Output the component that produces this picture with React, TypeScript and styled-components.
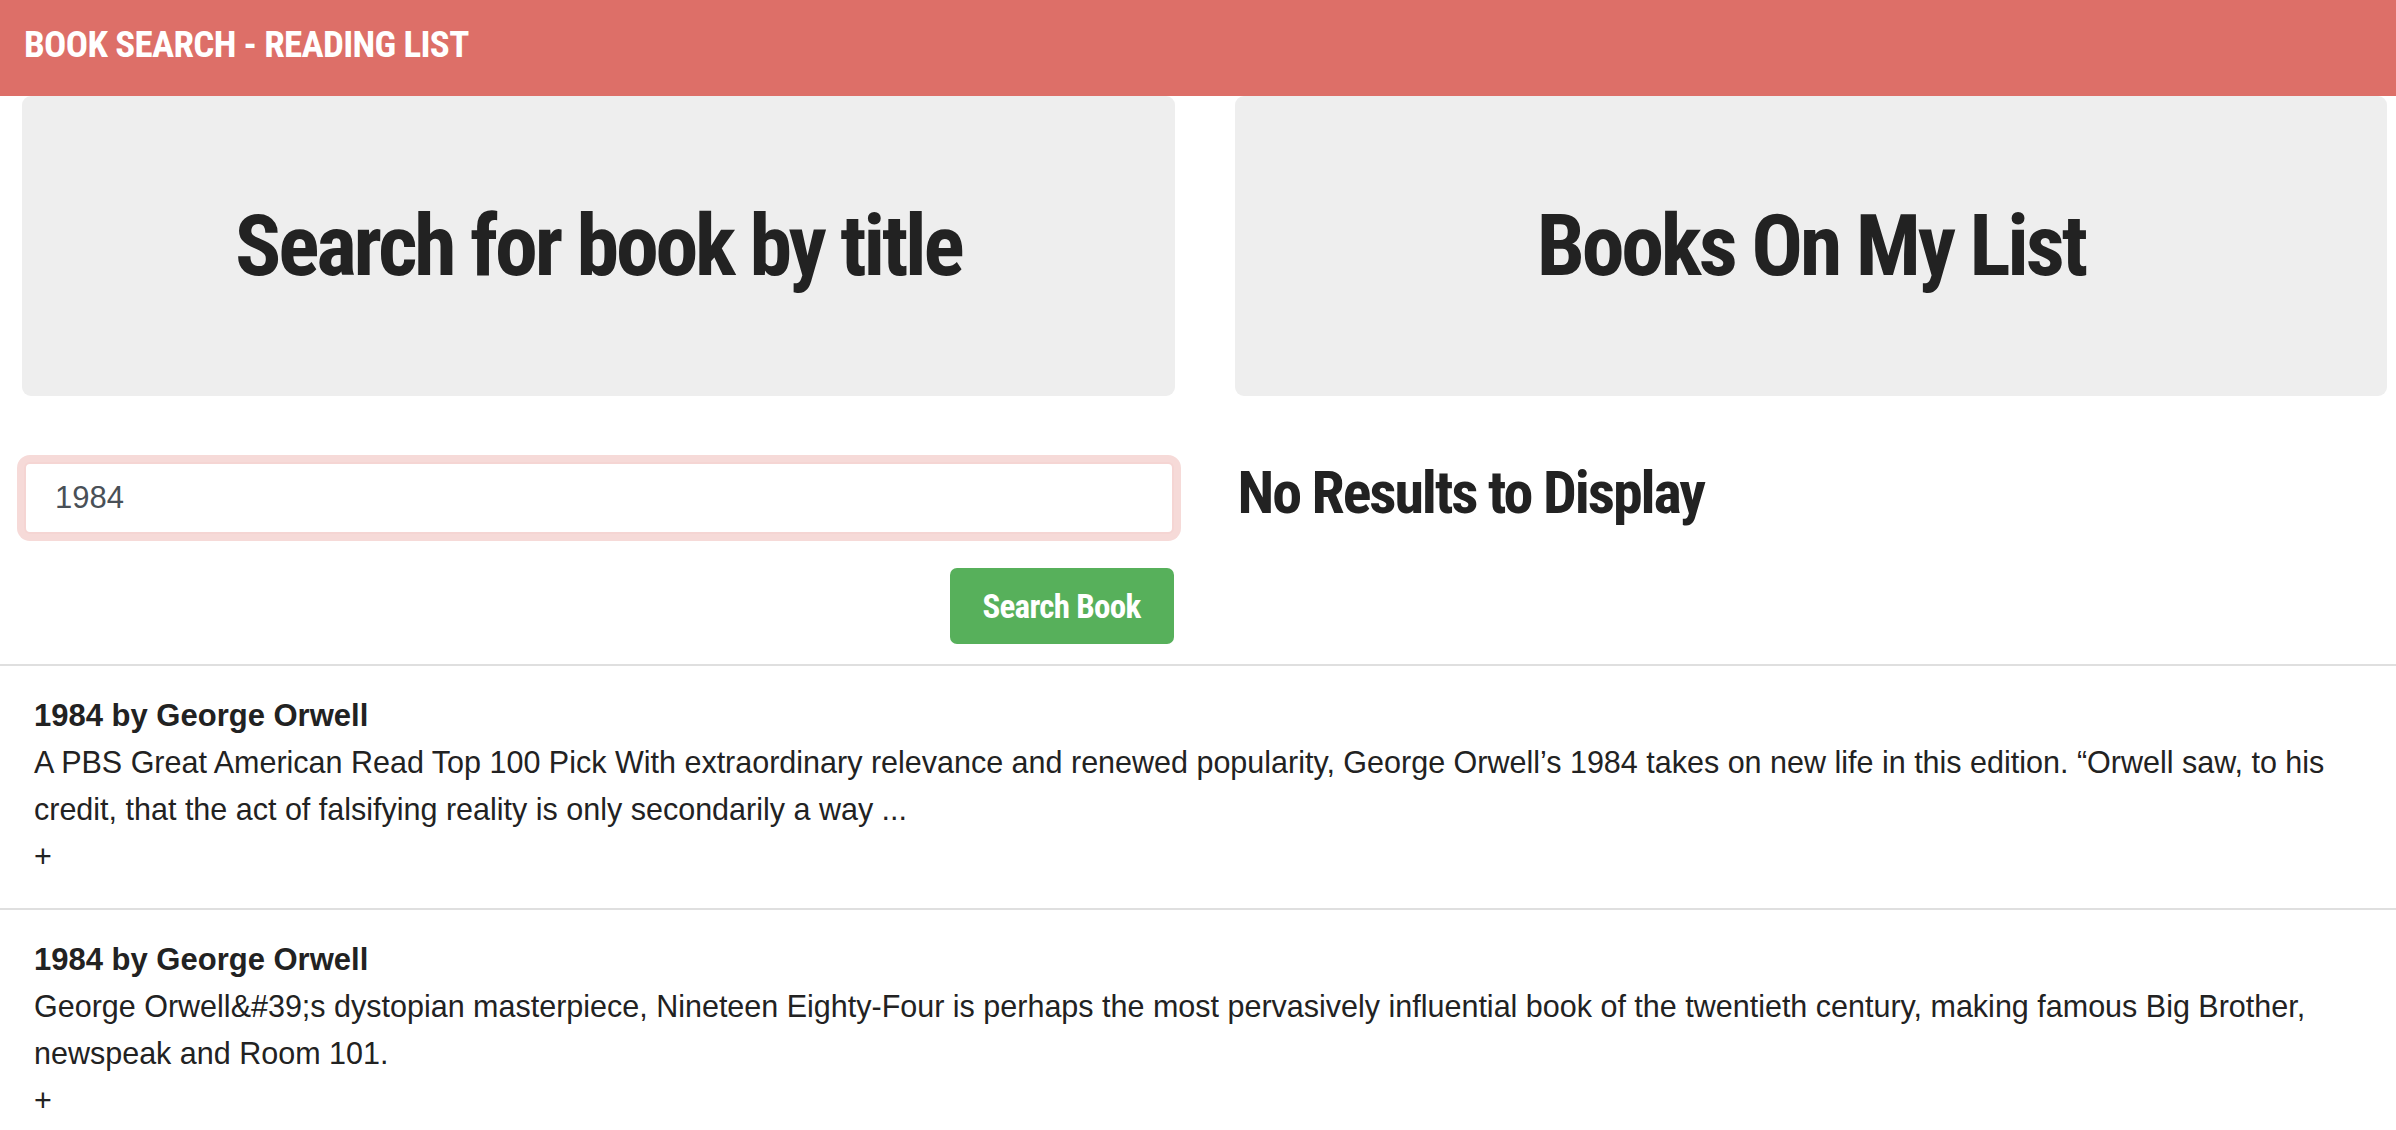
import React from "react";
import styled, { createGlobalStyle } from "styled-components";

const GlobalStyle = createGlobalStyle`
  html, body {
    margin: 0;
    padding: 0;
    background: #ffffff;
  }
  body {
    font-family: "Liberation Sans", Arial, sans-serif;
    color: #222222;
  }
  * {
    box-sizing: border-box;
  }
`;

const condensed = `"Roboto Condensed", "Open Sans Condensed", "DejaVu Sans Condensed", "DejaVu Sans", sans-serif`;

const Navbar = styled.header`
  height: 96px;
  background: #dd6f68;
  padding: 26px 24px 0;
`;

const Brand = styled.div`
  font-family: ${condensed};
  font-stretch: condensed;
  font-weight: 700;
  font-size: 37px;
  line-height: 37px;
  letter-spacing: -0.65px;
  color: #ffffff;
  white-space: nowrap;
`;

const Columns = styled.main`
  display: grid;
  grid-template-columns: 1fr 1fr;
  column-gap: 60px;
  padding: 0 9px 0 22px;
`;

const Column = styled.section`
  display: flex;
  flex-direction: column;
`;

const Jumbotron = styled.div`
  height: 300px;
  background: #eeeeee;
  border-radius: 9px;
  display: flex;
  align-items: center;
  justify-content: center;
`;

const BigTitle = styled.h1`
  margin: 0;
  font-family: ${condensed};
  font-stretch: condensed;
  font-weight: 700;
  font-size: 86px;
  line-height: 1.2;
  letter-spacing: -3.2px;
  color: #222222;
`;

const SearchForm = styled.form`
  display: flex;
  flex-direction: column;
  align-items: flex-end;
  padding: 66px 1px 0 2px;
`;

const SearchInput = styled.input`
  width: 100%;
  height: 72px;
  border: 2px solid #f5d5d3;
  border-radius: 6px;
  box-shadow: 0 0 0 7px #f6dad8;
  padding: 0 29px;
  font-family: "Liberation Sans", Arial, sans-serif;
  font-size: 31px;
  color: #495057;
  outline: none;
  background: #ffffff;
`;

const SearchButton = styled.button`
  margin-top: 34px;
  width: 224px;
  height: 76px;
  border: none;
  border-radius: 7px;
  background: #57b05b;
  color: #ffffff;
  font-family: ${condensed};
  font-stretch: condensed;
  font-weight: 700;
  font-size: 33px;
  letter-spacing: -0.7px;
  cursor: pointer;
`;

const EmptyNote = styled.h3`
  margin: 61px 0 0 3px;
  font-family: ${condensed};
  font-stretch: condensed;
  font-weight: 700;
  font-size: 60px;
  line-height: 1.2;
  letter-spacing: -2.1px;
  color: #222222;
`;

const Results = styled.ul`
  list-style: none;
  margin: 20px 0 0;
  padding: 0;
`;

const ResultItem = styled.li`
  border-top: 2px solid #dfdfdf;
  padding: 26px 34px 28px;
  font-size: 30.5px;
  line-height: 47px;
  color: #222222;
`;

const ResultTitle = styled.div`
  font-weight: 700;
  font-size: 31px;
`;

const AddButton = styled.div`
  cursor: pointer;
`;

const books = [
  {
    title: "1984 by George Orwell",
    description:
      "A PBS Great American Read Top 100 Pick With extraordinary relevance and renewed popularity, George Orwell\u2019s 1984 takes on new life in this edition. \u201cOrwell saw, to his credit, that the act of falsifying reality is only secondarily a way ...",
  },
  {
    title: "1984 by George Orwell",
    description:
      "George Orwell&#39;s dystopian masterpiece, Nineteen Eighty-Four is perhaps the most pervasively influential book of the twentieth century, making famous Big Brother, newspeak and Room 101.",
  },
];

const App = () => {
  return (
    <>
      <GlobalStyle />
      <Navbar>
        <Brand>BOOK SEARCH - READING LIST</Brand>
      </Navbar>
      <Columns>
        <Column>
          <Jumbotron>
            <BigTitle>Search for book by title</BigTitle>
          </Jumbotron>
          <SearchForm onSubmit={(e) => e.preventDefault()}>
            <SearchInput type="text" defaultValue="1984" />
            <SearchButton type="submit">Search Book</SearchButton>
          </SearchForm>
        </Column>
        <Column>
          <Jumbotron>
            <BigTitle>Books On My List</BigTitle>
          </Jumbotron>
          <EmptyNote>No Results to Display</EmptyNote>
        </Column>
      </Columns>
      <Results>
        {books.map((book, i) => (
          <ResultItem key={i}>
            <ResultTitle>{book.title}</ResultTitle>
            <div>{book.description}</div>
            <AddButton>+</AddButton>
          </ResultItem>
        ))}
      </Results>
    </>
  );
};

export default App;
